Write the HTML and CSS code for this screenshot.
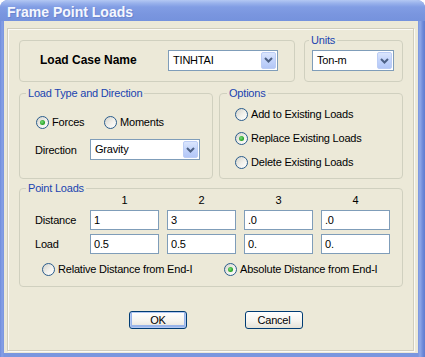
FILE: index.html
```html
<!DOCTYPE html>
<html>
<head>
<meta charset="utf-8">
<title>Frame Point Loads</title>
<link rel="stylesheet" href="styles.css">
</head>
<body>
<div class="window">
  <div class="titlebar"><span class="title">Frame Point Loads</span></div>
  <div class="client">
    <div class="panel">
      <div class="row row1">
        <div class="box loadcase">
          <span class="lc-label">Load Case Name</span>
          <div class="combo w-lc">
            <span class="combo-text">TINHTAI</span>
            <span class="combo-btn"><svg width="9" height="6" viewBox="0 0 9 6"><path d="M1 1 L4.5 4.5 L8 1" stroke="#4d6185" stroke-width="2" fill="none"/></svg></span>
          </div>
        </div>
        <fieldset class="group units">
          <legend class="lg-units">Units</legend>
          <div class="gbody units-body">
            <div class="combo w-units">
              <span class="combo-text">Ton-m</span>
              <span class="combo-btn"><svg width="9" height="6" viewBox="0 0 9 6"><path d="M1 1 L4.5 4.5 L8 1" stroke="#4d6185" stroke-width="2" fill="none"/></svg></span>
            </div>
          </div>
        </fieldset>
      </div>
      <div class="row row2">
        <fieldset class="group loadtype">
          <legend>Load Type and Direction</legend>
          <div class="gbody loadtype-body">
            <div class="radio-row">
              <span class="radio w-forces"><span class="circle checked"></span><span class="rtext">Forces</span></span>
              <span class="radio"><span class="circle"></span><span class="rtext">Moments</span></span>
            </div>
            <div class="dir-row">
              <span class="dir-label">Direction</span>
              <div class="combo w-dir">
                <span class="combo-text">Gravity</span>
                <span class="combo-btn"><svg width="9" height="6" viewBox="0 0 9 6"><path d="M1 1 L4.5 4.5 L8 1" stroke="#4d6185" stroke-width="2" fill="none"/></svg></span>
              </div>
            </div>
          </div>
        </fieldset>
        <fieldset class="group options">
          <legend class="lg-options">Options</legend>
          <div class="gbody opt-list">
            <span class="radio opt"><span class="circle"></span><span class="rtext">Add to Existing Loads</span></span>
            <span class="radio opt"><span class="circle checked"></span><span class="rtext">Replace Existing Loads</span></span>
            <span class="radio opt"><span class="circle"></span><span class="rtext">Delete Existing Loads</span></span>
          </div>
        </fieldset>
      </div>
      <fieldset class="group points">
        <legend>Point Loads</legend>
        <div class="gbody points-body">
          <div class="grid">
            <span></span>
            <span class="hdr">1</span>
            <span class="hdr">2</span>
            <span class="hdr">3</span>
            <span class="hdr">4</span>
            <span class="rowlabel">Distance</span>
            <div class="input">1</div>
            <div class="input">3</div>
            <div class="input">.0</div>
            <div class="input">.0</div>
            <span class="rowlabel">Load</span>
            <div class="input">0.5</div>
            <div class="input">0.5</div>
            <div class="input">0.</div>
            <div class="input">0.</div>
          </div>
          <div class="pos-row">
            <span class="radio w-rel"><span class="circle"></span><span class="rtext">Relative Distance from End-I</span></span>
            <span class="radio"><span class="circle checked"></span><span class="rtext">Absolute Distance from End-I</span></span>
          </div>
        </div>
      </fieldset>
      <div class="buttons">
        <div class="btn default">OK</div>
        <div class="btn">Cancel</div>
      </div>
    </div>
  </div>
</div>
</body>
</html>
```

FILE: styles.css
```css
* { box-sizing: border-box; }
html, body { margin: 0; padding: 0; background: #fff; }
body {
  width: 425px;
  height: 357px;
  overflow: hidden;
  font-family: "Liberation Sans", Arial, sans-serif;
  font-size: 11px;
  letter-spacing: -0.2px;
  color: #000;
}
.window {
  width: 425px;
  height: 357px;
  display: flex;
  flex-direction: column;
  background: linear-gradient(to right, #6f8cdc 0, #86a0e6 2px, #7a96df 4px, #7a96df 418px, #8ea7e8 420px, #6b88d8 423px, #5f7ccf 425px);
  border-radius: 8px 8px 0 0;
  overflow: hidden;
}
.titlebar {
  height: 21px;
  flex: none;
  background: linear-gradient(#b4c8f3 0, #9ab3ec 3px, #819de4 7px, #7a96df 14px, #7592dd 21px);
  overflow: hidden;
}
.title {
  display: block;
  padding: 2px 0 0 7px;
  line-height: 21px;
  font-size: 14px;
  font-weight: bold;
  letter-spacing: 0;
  color: #f4f7fe;
  text-shadow: 1px 1px 0 #6a84cf;
}
.client {
  flex: 1;
  margin: 0 7px 4px 4px;
  padding: 7px 4px 0 3px;
  background: #ece9d8;
}
.panel {
  height: 323px;
  border: 1px solid #d0cdbd;
  box-shadow: inset 1px 1px 0 #fbfaf5, 1px 1px 0 #fbfaf5;
  padding: 5px 10px 0 11px;
}
.row { display: flex; }
.row1 { height: 48px; gap: 9px; align-items: flex-end; }
.row2 { margin-top: 5px; height: 92px; gap: 6px; }

.group {
  margin: 0;
  padding: 0;
  min-width: 0;
  border: 1px solid #d0d0bf;
  border-radius: 4px;
}
.group legend {
  margin-left: 6px;
  padding: 0 2px;
  line-height: 13px;
  color: #1a44b0;
}
.group legend.lg-units { margin-left: 4px; }
.group legend.lg-options { margin-left: 7px; }
.box {
  border: 1px solid #d0d0bf;
  border-radius: 4px;
}
.loadcase {
  width: 276px;
  height: 42px;
  display: flex;
  align-items: center;
  padding: 0 0 2px 20px;
}
.lc-label {
  width: 128px;
  font-size: 12px;
  font-weight: bold;
  letter-spacing: 0;
}
.units {
  width: 99px;
  height: 48px;
}
.units-body { padding: 3px 0 0 7px; }

.combo {
  display: flex;
  height: 21px;
  border: 1px solid #7f9db9;
  background: #fff;
}
.w-lc { width: 110px; }
.w-units { width: 82px; }
.w-dir { width: 110px; }
.combo-text {
  flex: 1;
  padding-left: 4px;
  line-height: 19px;
}
.combo-btn {
  width: 15px;
  margin: 1px;
  display: flex;
  align-items: center;
  justify-content: center;
  border-radius: 2px;
  border: 1px solid #bccdf5;
  background: linear-gradient(#dbe6fd, #c3d4fb 50%, #b3c7f7);
}

.loadtype {
  width: 194px;
  height: 92px;
}
.loadtype-body { padding: 16px 0 0 15px; }
.options {
  width: 184px;
  height: 92px;
}
.radio-row { display: flex; height: 13px; align-items: center; }
.radio { display: flex; align-items: center; }
.w-forces { width: 68px; }
.loadtype .radio .circle { margin-left: 1px; }
.circle {
  width: 13px;
  height: 13px;
  flex: none;
  border-radius: 50%;
  border: 1px solid #2a5c8c;
  background: linear-gradient(135deg, #d4d3cb, #f2f1ec 55%, #fff);
  display: flex;
  align-items: center;
  justify-content: center;
}
.circle.checked::after {
  content: "";
  width: 5px;
  height: 5px;
  border-radius: 50%;
  background: radial-gradient(circle at 40% 40%, #7ddc7d, #2aa72a 60%, #1c8a1c);
}
.rtext { margin-left: 3px; line-height: 13px; }
.dir-row { display: flex; align-items: center; margin-top: 10px; }
.dir-label { width: 55px; }
.opt-list { display: flex; flex-direction: column; padding: 2px 0 0 15px; }
.opt { height: 24px; }

.points {
  margin-top: 3px;
  width: 384px;
  height: 105px;
}
.points-body { padding-left: 15px; }
.grid {
  display: grid;
  grid-template-columns: 47px repeat(4, 69px);
  grid-template-rows: 11px 20px 20px;
  column-gap: 8px;
  row-gap: 4px;
}
.hdr { text-align: center; line-height: 11px; }
.rowlabel { line-height: 20px; }
.input {
  height: 20px;
  border: 1px solid #7f9db9;
  background: #fff;
  padding-left: 3px;
  line-height: 18px;
}
.pos-row {
  display: flex;
  margin-top: 8px;
  height: 14px;
  align-items: center;
  padding-left: 7px;
}
.w-rel { width: 182px; }

.buttons {
  display: flex;
  gap: 58px;
  margin-top: 24px;
  padding-left: 110px;
}
.btn {
  width: 58px;
  height: 18px;
  border: 1px solid #003c74;
  border-radius: 3px;
  background: linear-gradient(#ffffff, #f5f4ef 55%, #e4e2d8);
  text-align: center;
  line-height: 16px;
}
.btn.default {
  box-shadow: inset 0 0 0 1px #b2c8f2, inset 0 -1px 0 2px #98b4ea;
}
```
